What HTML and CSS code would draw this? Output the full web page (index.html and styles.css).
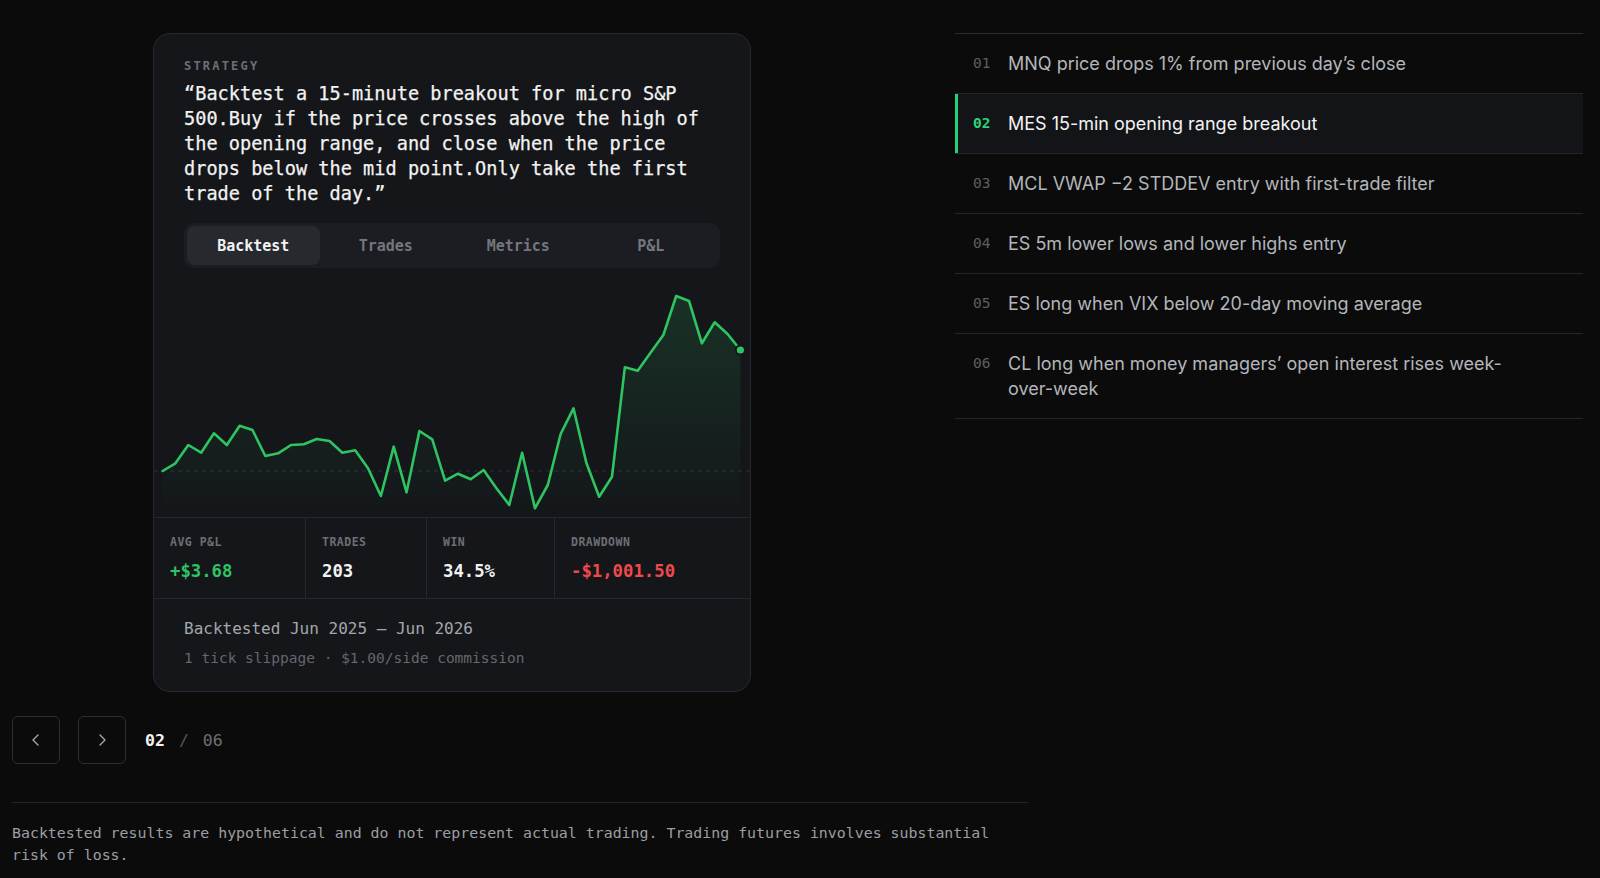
FILE: index.html
```html
<!DOCTYPE html>
<html lang="en">
<head>
<meta charset="utf-8">
<title>Strategy backtests</title>
<link rel="stylesheet" href="styles.css">
</head>
<body>
<div class="page">
  <div class="top">
    <div class="left">
      <div class="card">
        <div class="card-head">
          <div class="label">STRATEGY</div>
          <p class="quote">“Backtest a 15-minute breakout for micro S&amp;P 500.Buy if the price crosses above the high of the opening range, and close when the price drops below the mid point.Only take the first trade of the day.”</p>
          <div class="tabs">
            <div class="tab active">Backtest</div>
            <div class="tab">Trades</div>
            <div class="tab">Metrics</div>
            <div class="tab">P&amp;L</div>
          </div>
        </div>
        <div class="chart">
          <svg width="596" height="249" viewBox="0 0 596 249">
            <defs>
              <linearGradient id="fillg" x1="0" y1="0" x2="0" y2="1">
                <stop offset="0" stop-color="#2fc462" stop-opacity="0.16"/>
                <stop offset="1" stop-color="#2fc462" stop-opacity="0"/>
              </linearGradient>
            </defs>
            <line x1="0" y1="203" x2="596" y2="203" stroke="#2e3137" stroke-width="1" stroke-dasharray="4 4"/>
            <polygon fill="url(#fillg)" points="8.6,203 21.44,195.3 34.28,177 47.12,184.7 59.96,165.3 72.8,177 85.64,157.7 98.48,162 111.32,188 124.16,185.3 137,177 149.84,176.3 162.68,171 175.52,173 188.36,184.7 201.2,182.3 214.04,200.3 226.88,228 239.72,178.7 252.56,224.3 265.4,163 278.24,171.3 291.08,212.7 303.92,205.7 316.76,211.3 329.6,202 342.44,220.3 355.28,237 368.12,184.7 380.96,240.3 393.8,217 406.64,166 419.48,140.3 432.32,194.7 445.16,228.7 458,208.7 470.84,99.3 483.68,102.7 496.52,84.7 509.36,67 522.2,28 535.04,33 547.88,75.3 560.72,54.3 573.56,66 586.4,82 586.4,249 8.6,249"/>
            <polyline fill="none" stroke="#2fc462" stroke-width="2.6" stroke-linejoin="round" stroke-linecap="round" points="8.6,203 21.44,195.3 34.28,177 47.12,184.7 59.96,165.3 72.8,177 85.64,157.7 98.48,162 111.32,188 124.16,185.3 137,177 149.84,176.3 162.68,171 175.52,173 188.36,184.7 201.2,182.3 214.04,200.3 226.88,228 239.72,178.7 252.56,224.3 265.4,163 278.24,171.3 291.08,212.7 303.92,205.7 316.76,211.3 329.6,202 342.44,220.3 355.28,237 368.12,184.7 380.96,240.3 393.8,217 406.64,166 419.48,140.3 432.32,194.7 445.16,228.7 458,208.7 470.84,99.3 483.68,102.7 496.52,84.7 509.36,67 522.2,28 535.04,33 547.88,75.3 560.72,54.3 573.56,66 586.4,82"/>
            <circle cx="586.4" cy="82" r="4.6" fill="#2fc462" stroke="#14161a" stroke-width="2"/>
          </svg>
        </div>
        <div class="stats">
          <div class="stat">
            <div class="stat-label">AVG P&amp;L</div>
            <div class="stat-value pos">+$3.68</div>
          </div>
          <div class="stat">
            <div class="stat-label">TRADES</div>
            <div class="stat-value">203</div>
          </div>
          <div class="stat">
            <div class="stat-label">WIN</div>
            <div class="stat-value">34.5%</div>
          </div>
          <div class="stat">
            <div class="stat-label">DRAWDOWN</div>
            <div class="stat-value neg">-$1,001.50</div>
          </div>
        </div>
        <div class="card-foot">
          <div class="range">Backtested Jun 2025 – Jun 2026</div>
          <div class="costs">1 tick slippage · $1.00/side commission</div>
        </div>
      </div>
      <div class="nav">
        <button class="nav-btn" aria-label="Previous">
          <svg width="12" height="14" viewBox="0 0 12 14"><path d="M8 2 L3 7 L8 12" fill="none" stroke="#a3a6ab" stroke-width="1.4" stroke-linecap="round" stroke-linejoin="round"/></svg>
        </button>
        <button class="nav-btn" aria-label="Next">
          <svg width="12" height="14" viewBox="0 0 12 14"><path d="M4 2 L9 7 L4 12" fill="none" stroke="#a3a6ab" stroke-width="1.4" stroke-linecap="round" stroke-linejoin="round"/></svg>
        </button>
        <div class="counter"><span class="cur">02</span><span class="sep">/</span><span class="total">06</span></div>
      </div>
    </div>
    <ul class="list">
      <li class="item"><span class="num">01</span><span class="text">MNQ price drops 1% from previous day’s close</span></li>
      <li class="item active"><span class="num">02</span><span class="text">MES 15-min opening range breakout</span></li>
      <li class="item"><span class="num">03</span><span class="text">MCL VWAP −2 STDDEV entry with first-trade filter</span></li>
      <li class="item"><span class="num">04</span><span class="text">ES 5m lower lows and lower highs entry</span></li>
      <li class="item"><span class="num">05</span><span class="text">ES long when VIX below 20-day moving average</span></li>
      <li class="item"><span class="num">06</span><span class="text">CL long when money managers’ open interest rises week-over-week</span></li>
    </ul>
  </div>
  <div class="disclaimer">Backtested results are hypothetical and do not represent actual trading. Trading futures involves substantial risk of loss.</div>
</div>
</body>
</html>
```

FILE: styles.css
```css
* { box-sizing: border-box; }
html, body { margin: 0; padding: 0; }
body {
  background: #0b0b0c;
  color: #e8e8e8;
  font-family: "DejaVu Sans Mono", "Liberation Mono", monospace;
  width: 1600px;
  height: 878px;
  overflow: hidden;
}
.page {
  padding: 33px 17px 0 12px;
}
.top {
  display: grid;
  grid-template-columns: 880px 628px;
  column-gap: 63px;
  align-items: start;
}
.left {
  display: flex;
  flex-direction: column;
}
.card {
  width: 598px;
  margin: 0 auto;
  height: 659px;
  background: #14161a;
  border: 1px solid #26292e;
  border-radius: 17px;
  display: flex;
  flex-direction: column;
  overflow: hidden;
}
.card-head {
  padding: 24px 30px 0 30px;
}
.label {
  font-size: 12px;
  line-height: 16px;
  letter-spacing: 2.2px;
  color: #6c6f75;
  font-weight: bold;
}
.quote {
  margin: 7px 0 0 0;
  font-size: 18.6px;
  line-height: 25px;
  color: #f2f2f2;
  -webkit-text-stroke: 0.25px #f2f2f2;
}
.tabs {
  margin-top: 17px;
  height: 45px;
  padding: 3px;
  background: #1b1d22;
  border-radius: 10px;
  display: grid;
  grid-template-columns: repeat(4, 1fr);
}
.tab {
  display: flex;
  align-items: center;
  justify-content: center;
  font-size: 15px;
  font-weight: bold;
  color: #73767c;
  border-radius: 8px;
}
.tab.active {
  background: #26292e;
  color: #f2f2f2;
}
.chart {
  height: 249px;
  display: flex;
}
.chart svg { display: block; }
.stats {
  display: grid;
  grid-template-columns: 151px 121px 128px 1fr;
  border-top: 1px solid #24272c;
  border-bottom: 1px solid #24272c;
  height: 82px;
}
.stat {
  padding: 17px 16px 0 16px;
}
.stat + .stat { border-left: 1px solid #24272c; }
.stat-label {
  font-size: 11.5px;
  line-height: 15px;
  letter-spacing: 0.5px;
  color: #6c6f75;
  font-weight: bold;
}
.stat-value {
  margin-top: 10px;
  font-size: 17.3px;
  line-height: 22px;
  font-weight: bold;
  color: #f2f2f2;
}
.stat-value.pos { color: #2fc462; }
.stat-value.neg { color: #f0494c; }
.card-foot {
  padding: 19px 30px 0 30px;
}
.range {
  font-size: 16px;
  line-height: 22px;
  color: #a4a7ac;
}
.costs {
  margin-top: 8px;
  font-size: 14.5px;
  line-height: 20px;
  color: #64676c;
}
.nav {
  margin-top: 24px;
  display: flex;
  align-items: center;
  gap: 18px;
}
.nav-btn {
  width: 48px;
  height: 48px;
  border: 1.5px solid #2c2e32;
  border-radius: 6px;
  background: transparent;
  display: flex;
  align-items: center;
  justify-content: center;
  padding: 0;
}
.counter {
  display: flex;
  gap: 14px;
  font-size: 16.5px;
  margin-left: 1px;
}
.cur { color: #f2f2f2; font-weight: bold; }
.sep { color: #55585d; }
.total { color: #6c6f75; }
.list {
  list-style: none;
  margin: 0;
  padding: 0;
  border-top: 1px solid #2a2c30;
}
.item {
  display: flex;
  align-items: flex-start;
  padding: 17px 48px 17px 18px;
  border-bottom: 1px solid #232529;
}
.item .num {
  width: 35px;
  flex: none;
  font-size: 14.5px;
  line-height: 25px;
  color: #5c5f64;
}
.item .text {
  font-family: "Inter", "Noto Sans", sans-serif;
  font-size: 18px;
  line-height: 25px;
  color: #b3b6ba;
}
.item.active {
  background: #131417;
  box-shadow: inset 3px 0 0 #26d07a;
}
.item.active .num { color: #2bd47a; font-weight: bold; }
.item.active .text { color: #f2f2f2; }
.disclaimer {
  margin-top: 38px;
  width: 1016px;
  border-top: 1px solid #222427;
  padding-top: 19px;
  font-size: 14.9px;
  line-height: 22px;
  color: #9b9ea3;
}
```
